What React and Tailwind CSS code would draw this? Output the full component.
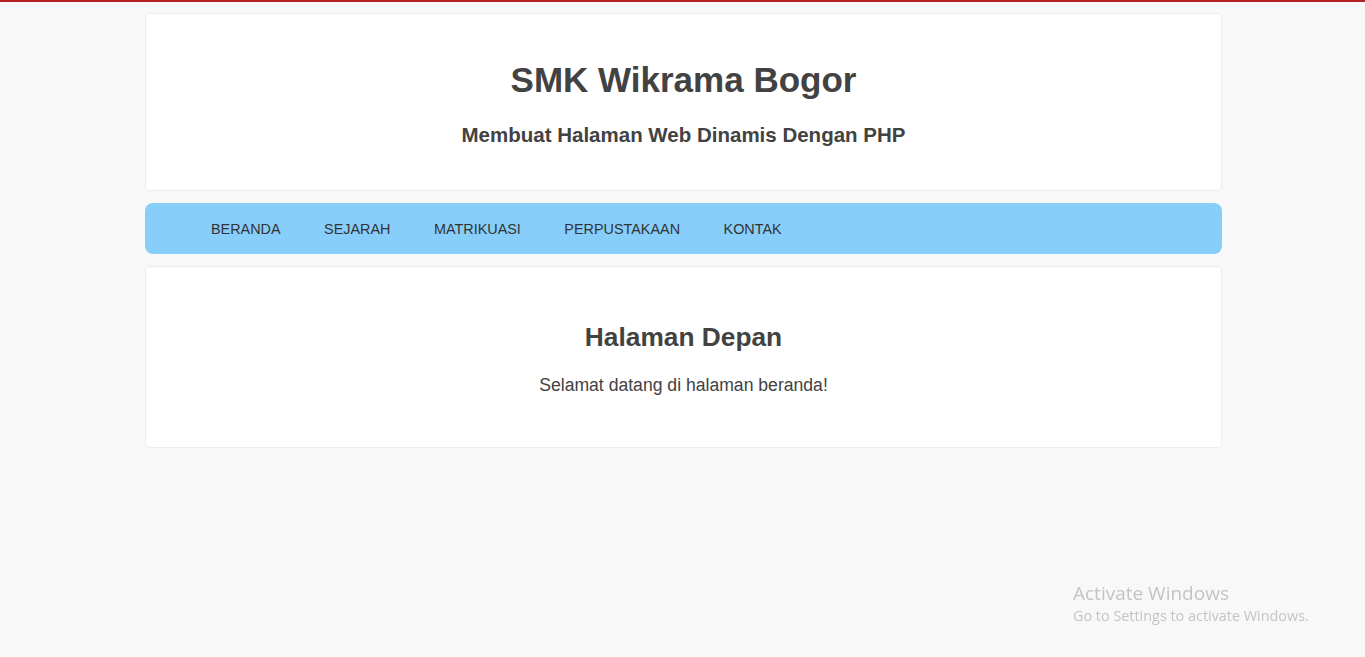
export default function App() {
  const nav = ["BERANDA", "SEJARAH", "MATRIKUASI", "PERPUSTAKAAN", "KONTAK"];
  return (
    <div className="min-h-[657px] bg-[#f8f8f8] border-t-2 border-[#b22222] text-[#424242]" style={{ fontFamily: '"Liberation Sans", Arial, sans-serif' }}>
      <div className="w-[1077px] ml-[145px] pt-[11px] flex flex-col">
        <header className="bg-white border border-[#ececec] rounded-[5px] h-[178px] flex flex-col items-center pt-[41px]">
          <h1 className="text-[35px] font-bold leading-[50px]">SMK Wikrama Bogor</h1>
          <h2 className="text-[20.5px] font-bold leading-[30px] mt-[15px]">Membuat Halaman Web Dinamis Dengan PHP</h2>
        </header>
        <nav className="mt-[12px] bg-[#87cefa] rounded-[8px] h-[51px] flex items-center pt-[2px] pl-[66px] gap-[43.5px] text-[14.4px] text-[#333]">
          {nav.map((n) => (
            <span key={n}>{n}</span>
          ))}
        </nav>
        <main className="mt-[12px] bg-white border border-[#ececec] rounded-[5px] h-[182px] flex flex-col items-center pt-[50px]">
          <h2 className="text-[26.3px] font-bold leading-[40px]">Halaman Depan</h2>
          <p className="text-[17.6px] leading-[27px] mt-[15px]">Selamat datang di halaman beranda!</p>
        </main>
      </div>
      <div className="fixed left-[1073px] top-[580px] text-[#c4c4c4]" style={{ fontFamily: '"Open Sans", sans-serif' }}>
        <div className="text-[19px] leading-[26px]">Activate Windows</div>
        <div className="text-[14.4px] leading-[20px]">Go to Settings to activate Windows.</div>
      </div>
    </div>
  );
}
